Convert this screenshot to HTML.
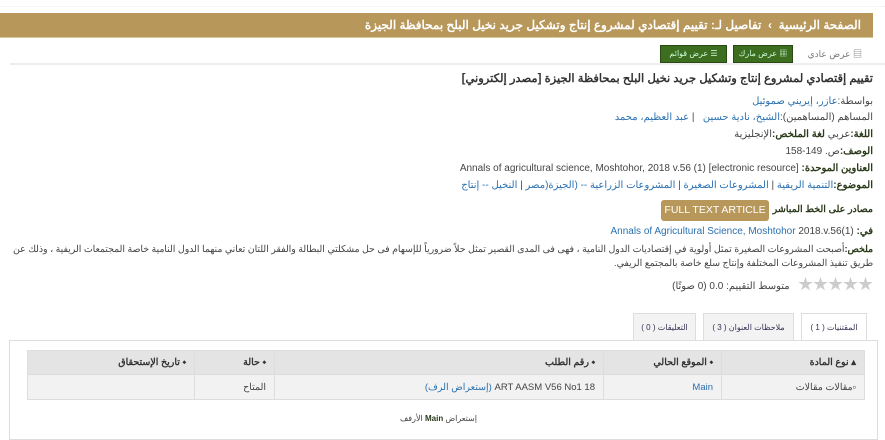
<!DOCTYPE html>
<html dir="rtl"><head><meta charset="utf-8"><style>
*{margin:0;padding:0;box-sizing:border-box}
body{width:885px;height:429px;overflow:hidden;background:#fff;font-family:"Liberation Sans","Noto Sans CJK SC",sans-serif;font-size:10px;color:#444;position:relative}
.a{position:absolute}
a,.l{color:#2a70b0}
b{color:#2a3a1a}
.bar{left:0;width:873px;top:13px;height:25px;background:#b8975a;border-bottom:1px solid #d8c89a;color:#fff;font-weight:bold;font-size:12px;padding-right:12px;line-height:25px;text-align:right}
.btn{top:45px;height:18px;background:#3d6d1e;border:1px solid #2a4a15;color:#cfd;font-size:8px;line-height:16px;text-align:center}
.ln{right:12px;text-align:right;white-space:nowrap}
th,td{border:1px solid #ddd;text-align:right;padding:0 8px;font-size:9.5px}
th{background:#e4e4e4;height:24px;color:#333}
td{background:#f2f2f2;height:25px}
.tab{top:313px;height:27px;border:1px solid #ddd;border-bottom:none;background:#f3f3f3;font-size:8px;text-align:center;line-height:27px;color:#335}
</style></head><body>
<div class="a" style="top:6px;left:0;width:885px;border-top:1px dotted #eee"></div>
<div class="a bar">الصفحة الرئيسية &nbsp;› &nbsp;تفاصيل لـ: تقييم إقتصادي لمشروع إنتاج وتشكيل جريد نخيل البلح بمحافظة الجيزة</div>
<div class="a" style="right:23px;top:47px;font-size:9px;color:#777">▤ عرض عادي</div>
<div class="a btn" style="left:733px;width:60px">▦ عرض مارك</div>
<div class="a btn" style="left:660px;width:67px">☰ عرض قوائم</div>
<div class="a" style="left:10px;right:0;top:63px;height:2px;background:#eee"></div>
<div class="a ln" style="top:71px;font-weight:bold;font-size:11.5px;color:#333">تقييم إقتصادي لمشروع إنتاج وتشكيل جريد نخيل البلح بمحافظة الجيزة [مصدر إلكتروني]</div>
<div class="a ln" style="top:96px">بواسطة:<span class="l">عازر، إيريني صموئيل</span></div>
<div class="a ln" style="top:112px">المساهم (المساهمين):<span class="l">الشيخ، نادية حسين &nbsp;</span> | <span class="l">عبد العظيم، محمد</span></div>
<div class="a ln" style="top:129px"><b>اللغة:</b>عربي <b>لغة الملخص:</b>الإنجليزية</div>
<div class="a ln" style="top:146px"><b>الوصف:</b>ص. 149-158</div>
<div class="a ln" style="top:163px"><b>العناوين الموحدة:</b> Annals of agricultural science, Moshtohor, 2018 v.56 (1) [electronic resource]</div>
<div class="a ln" style="top:180px"><b>الموضوع:</b><span class="l">التنمية الريفية</span> | <span class="l">المشروعات الصغيرة</span> | <span class="l">المشروعات الزراعية -- (الجيزة(مصر</span> | <span class="l">النخيل -- إنتاج</span></div>
<div class="a ln" style="top:204px;font-size:9.5px"><b>مصادر على الخط المباشر</b></div>
<div class="a" style="left:661px;top:200px;width:108px;height:21px;background:#b8975a;color:#fff;border-radius:3px;font-size:10.5px;line-height:21px;text-align:center">FULL TEXT ARTICLE</div>
<div class="a ln" style="top:226px"><b>في:</b> <span class="l">Annals of Agricultural Science, Moshtohor</span> 2018.v.56(1)</div>
<div class="a" style="right:12px;left:2px;top:242px;text-align:right;line-height:14px;font-size:9.3px;letter-spacing:-0.15px"><b>ملخص:</b>أصبحت المشروعات الصغيرة تمثل أولوية في إقتصاديات الدول النامية ، فهى فى المدى القصير تمثل حلاً ضرورياً للإسهام فى حل مشكلتي البطالة والفقر اللتان تعاني منهما الدول النامية خاصة المجتمعات الريفية ، وذلك عن طريق تنفيذ المشروعات المختلفة وإنتاج سلع خاصة بالمجتمع الريفي.</div>
<div class="a ln" style="top:273px"><span style="color:#ccc;font-size:15px;letter-spacing:-1px">★★★★★</span> &nbsp; متوسط التقييم: 0.0 (0 صوتًا)</div>
<div class="a tab" style="left:801px;width:66px;background:#fff;height:28px">المقتنيات ( 1 )</div>
<div class="a tab" style="left:703px;width:91px">ملاحظات العنوان ( 3 )</div>
<div class="a tab" style="left:633px;width:63px">التعليقات ( 0 )</div>
<div class="a" style="left:9px;width:869px;top:340px;height:100px;border:1px solid #ddd"></div>
<table class="a" style="left:27px;top:350px;width:838px;border-collapse:collapse">
<tr><th style="width:143px">▴ نوع المادة</th><th style="width:118px">⬩ الموقع الحالي</th><th style="width:329px">⬩ رقم الطلب</th><th style="width:80px">⬩ حالة</th><th>⬩ تاريخ الإستحقاق</th></tr>
<tr><td>▫مقالات مقالات</td><td class="l" style="color:#2a70b0">Main</td><td>ART AASM V56 No1 18 <span class="l">(إستعراض الرف)</span></td><td>المتاح</td><td></td></tr>
</table>
<div class="a" style="left:400px;top:414px;font-size:8px;color:#444">إستعراض <b>Main</b> الأرفف</div>
</body></html>
